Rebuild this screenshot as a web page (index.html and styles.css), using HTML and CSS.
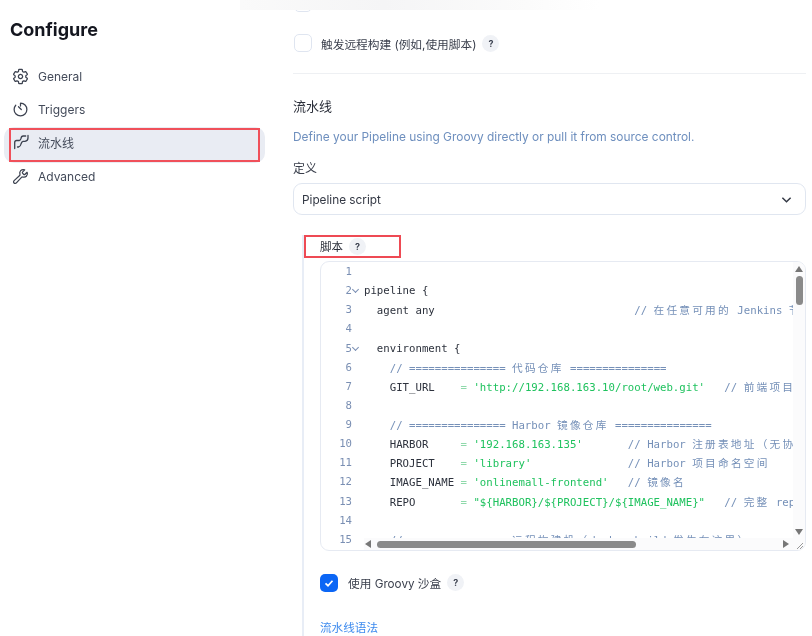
FILE: index.html
```html
<!DOCTYPE html>
<html lang="zh">
<head>
<meta charset="utf-8">
<title>Configure</title>
<link rel="stylesheet" href="styles.css">
</head>
<body>
<div class="page">
  <div class="top-fade"></div>
  <aside class="sidebar">
    <h1 class="title">Configure</h1>
    <nav class="menu">
      <a class="item">
        <svg class="icon" viewBox="0 0 512 512"><path class="st" d="M262.29 192.31a64 64 0 1057.4 57.4 64.13 64.13 0 00-57.4-57.4zM416.39 256a154.34 154.34 0 01-1.53 20.79l45.21 35.46a10.81 10.81 0 012.45 13.75l-42.77 74a10.81 10.81 0 01-13.14 4.59l-44.9-18.08a16.11 16.11 0 00-15.17 1.75A164.48 164.48 0 01325 400.8a15.94 15.94 0 00-8.82 12.14l-6.73 47.89a11.08 11.08 0 01-10.68 9.17h-85.54a11.11 11.11 0 01-10.69-8.87l-6.72-47.82a16.07 16.07 0 00-9-12.22 155.3 155.3 0 01-21.46-12.57 16 16 0 00-15.11-1.71l-44.89 18.07a10.81 10.81 0 01-13.14-4.58l-42.77-74a10.8 10.8 0 012.45-13.75l38.21-30a16.05 16.05 0 006-14.08c-.36-4.17-.58-8.33-.58-12.5s.21-8.27.58-12.35a16 16 0 00-6.07-13.94l-38.19-30A10.81 10.81 0 0149.48 186l42.77-74a10.81 10.81 0 0113.14-4.59l44.9 18.08a16.11 16.11 0 0015.17-1.75A164.48 164.48 0 01187 111.2a15.94 15.94 0 008.82-12.14l6.73-47.89A11.08 11.08 0 01213.23 42h85.54a11.11 11.11 0 0110.69 8.87l6.72 47.82a16.07 16.07 0 009 12.22 155.3 155.3 0 0121.46 12.57 16 16 0 0015.11 1.71l44.89-18.07a10.81 10.81 0 0113.14 4.58l42.77 74a10.8 10.8 0 01-2.45 13.75l-38.21 30a16.05 16.05 0 00-6.07 14.08c.33 4.14.55 8.3.55 12.47z"/></svg>
        <span>General</span>
      </a>
      <a class="item">
        <svg class="icon" viewBox="0 0 512 512"><path class="st" d="M112.91 128A191.85 191.85 0 0064 254c-1.18 106.35 85.65 193.8 192 194 106.2.2 192-85.83 192-192 0-104.54-83.55-189.61-187.5-192a4.36 4.36 0 00-4.5 4.37V152"/><path class="st" d="M280 256l-84-84"/></svg>
        <span>Triggers</span>
      </a>
      <a class="item active">
        <svg class="icon" viewBox="0 0 17 17"><path class="st2" d="M2.700 14.500V8.500q0-2 2-2h2.500q1.500-.3 1.800-2 .3-2.500 2.200-2.500h2.500"/><path class="st2" d="M16 1.500V4q0 3-3 3.300h-2q-1.500.3-2 2.700-.5 2.700-2.500 3H5.500"/></svg>
        <span>流水线</span>
        <span class="mark-nav"></span>
      </a>
      <a class="item">
        <svg class="icon" viewBox="0 0 512 512"><path class="st" d="M393.87 190a32.1 32.1 0 01-45.25 0l-26.57-26.57a32.09 32.09 0 010-45.26L382.19 58a1 1 0 00-.3-1.64c-38.82-16.64-89.15-8.16-121.11 23.57-30.58 30.35-32.32 76-21.12 115.84a31.93 31.93 0 01-9.06 32.08L64 380a48.17 48.17 0 1068 68l153.86-167a31.93 31.93 0 0131.6-9.13c39.54 10.59 84.54 8.6 114.72-21.19 32.49-32 39.5-88.56 23.75-120.93a1 1 0 00-1.6-.26z"/></svg>
        <span>Advanced</span>
      </a>
    </nav>
  </aside>

  <main class="main">
    <div class="cut-row"><span class="box"></span></div>
    <div class="check-row first">
      <span class="box"></span>
      <span class="check-label">触发远程构建 (例如,使用脚本)</span>
      <span class="help">?</span>
    </div>
    <hr class="divider">
    <h2 class="section">流水线</h2>
    <p class="desc">Define your Pipeline using Groovy directly or pull it from source control.</p>
    <div class="field-label">定义</div>
    <div class="select">
      <span>Pipeline script</span>
      <svg class="chev" viewBox="0 0 12 8"><path d="M1.500 1.500 6 6l4.500-4.500"/></svg>
    </div>

    <section class="nested">
      <div class="script-label">
        <span>脚本</span>
        <span class="help">?</span>
      </div>
      <div class="editor">
        <div class="gutter">
          <div class="ln">1</div><div class="ln fold">2</div><div class="ln">3</div><div class="ln">4</div><div class="ln fold">5</div><div class="ln">6</div><div class="ln">7</div><div class="ln">8</div><div class="ln">9</div><div class="ln">10</div><div class="ln">11</div><div class="ln">12</div><div class="ln">13</div><div class="ln">14</div><div class="ln">15</div>
        </div>
        <div class="code">
          <div class="cl"> </div>
          <div class="cl">pipeline {</div>
          <div class="cl">  agent any                               <span class="cm">// <i>在任意可用的</i> Jenkins <i>节</i></span></div>
          <div class="cl"> </div>
          <div class="cl">  environment {</div>
          <div class="cl">    <span class="cm">// =============== <i>代码仓库</i> ===============</span></div>
          <div class="cl">    GIT_URL    <span class="eq">=</span> <span class="str">'http://192.168.163.10/root/web.git'</span>   <span class="cm">// <i>前端项目</i></span></div>
          <div class="cl"> </div>
          <div class="cl">    <span class="cm">// =============== Harbor <i>镜像仓库</i> ===============</span></div>
          <div class="cl">    HARBOR     <span class="eq">=</span> <span class="str">'192.168.163.135'</span>       <span class="cm">// Harbor <i>注册表地址（无协</i></span></div>
          <div class="cl">    PROJECT    <span class="eq">=</span> <span class="str">'library'</span>               <span class="cm">// Harbor <i>项目命名空间</i></span></div>
          <div class="cl">    IMAGE_NAME <span class="eq">=</span> <span class="str">'onlinemall-frontend'</span>   <span class="cm">// <i>镜像名</i></span></div>
          <div class="cl">    REPO       <span class="eq">=</span> <span class="str">"${HARBOR}/${PROJECT}/${IMAGE_NAME}"</span>   <span class="cm">// <i>完整</i> rep</span></div>
          <div class="cl"> </div>
          <div class="cl">    <span class="cm">// =============== <i>远程构建机（</i>docker build <i>发生在这里）</i></span></div>
        </div>
        <div class="vbar">
          <svg class="arrow up" viewBox="0 0 8 6"><path d="M4 0l4 6H0z"/></svg>
          <span class="vthumb"></span>
          <svg class="arrow down" viewBox="0 0 8 6"><path d="M4 6l4-6H0z"/></svg>
        </div>
        <div class="hbar">
          <svg class="arrow left" viewBox="0 0 6 8"><path d="M0 4l6-4v8z"/></svg>
          <span class="hthumb"></span>
          <svg class="arrow right" viewBox="0 0 6 8"><path d="M6 4L0 0v8z"/></svg>
          <svg class="grip" viewBox="0 0 6 6"><path d="M0 6l6-6M3 6l3-3"/></svg>
        </div>
      </div>
      <div class="check-row groovy">
        <span class="box on"><svg viewBox="0 0 12 12"><path d="M2.500 6.300 5 8.700l4.500-5"/></svg></span>
        <span class="check-label">使用 Groovy 沙盒</span>
        <span class="help">?</span>
      </div>
      <a class="link">流水线语法</a>
    </section>
  </main>
</div>
</body>
</html>
```
FILE: styles.css
```css
* { box-sizing: border-box; }
html, body { margin: 0; height: 100%; background: #fff; overflow: hidden; }
body { font-family: Inter, "Noto Sans CJK SC", sans-serif; color: #1f2433; }
.page { position: relative; display: flex; width: 812px; height: 636px; overflow: hidden; filter: blur(0.3px); }
.top-fade { position: absolute; left: 240px; top: 0; width: 360px; height: 10px; background: linear-gradient(90deg, #fafafa, #f5f5f6 40%, #fbfbfb 80%, #fff); }

.sidebar { width: 293px; flex: none; padding: 20px 28px 0 4px; }
.title { margin: 0 0 20px 6px; font-size: 18px; line-height: 20px; font-weight: 700; color: #14161f; }
.menu { display: flex; flex-direction: column; }
.item { position: relative; display: flex; align-items: center; gap: 9px; height: 33.3px; padding-left: 8px; font-size: 12px; color: #444b5a; border-radius: 10px; }
.item.active { background: #e9ecf3; height: 36px; margin: 0.4px 0 -3px; padding-bottom: 5px; }
.icon { width: 17px; height: 17px; flex: none; }
.st { fill: none; stroke: #3c4250; stroke-width: 38; stroke-linecap: round; stroke-linejoin: round; }
.st2 { fill: none; stroke: #3c4250; stroke-width: 1.3; stroke-linecap: round; stroke-linejoin: round; }
.mark-nav { position: absolute; left: 5px; right: 5px; top: 1px; bottom: 1px; border: 2px solid #f0505a; }

.main { width: 513px; flex: none; }
.cut-row { height: 12px; overflow: hidden; display: flex; align-items: flex-end; }
.box { display: block; width: 18px; height: 18px; flex: none; margin-left: 1px; border: 1.5px solid #dfe5f0; border-radius: 5px; background: #fff; }
.check-row { display: flex; align-items: center; font-size: 11.7px; color: #3a3f4c; }
.check-row.first { margin-top: 22px; height: 18px; }
.check-label { margin-left: 9px; }
.help { display: flex; align-items: center; justify-content: center; width: 17px; height: 17px; margin-left: 6px; border-radius: 50%; background: #f0f2f6; color: #404654; font-size: 9px; font-weight: 700; }
.divider { margin: 21px 0 0; border: 0; border-top: 1px solid #eef0f3; }
.section { margin: 23px 0 0; font-size: 13px; line-height: 18px; font-weight: 400; color: #2b2f3a; }
.desc { margin: 13px 0 0; font-size: 11.9px; line-height: 18px; color: #6e8fbe; }
.field-label { margin-top: 14px; font-size: 12px; line-height: 18px; color: #3a3f4c; }
.select { display: flex; align-items: center; justify-content: space-between; height: 32px; margin-top: 5px; padding: 1px 13px 0 8px; border: 1px solid #e0e6f0; border-radius: 9px; font-size: 11.8px; color: #333844; }
.chev { width: 11px; height: 8px; fill: none; stroke: #333844; stroke-width: 1.6; }

.nested { margin: 20px 0 0 9px; padding-left: 0; border-left: 2px solid #e8edf6; height: 401px; }
.script-label { display: flex; align-items: center; width: 97px; height: 23px; padding: 0 0 1px 14px; border: 2px solid #ee4a54; font-size: 11.5px; color: #2b2f3a; }
.script-label .help { margin-left: 6px; }
.editor { position: relative; display: flex; width: 486px; height: 290px; margin: 3px 0 0 16px; border: 1px solid #e6eaf2; border-radius: 9px; overflow: hidden; background: #fff; font-family: "DejaVu Sans Mono", monospace; font-size: 10.7px; line-height: 19.14px; }
.gutter { width: 43px; flex: none; color: #7a8fb3; }
.ln { position: relative; height: 19.14px; padding-right: 12px; text-align: right; }
.ln.fold::after { content: ""; position: absolute; right: 6px; top: 6px; width: 4px; height: 4px; border-right: 1px solid #7a8fb3; border-bottom: 1px solid #7a8fb3; transform: rotate(45deg); }
.code { flex: 1; min-width: 0; overflow: hidden; color: #2d323d; }
.cl { height: 19.14px; white-space: pre; }
.cm { color: #7590b8; }
.cm i { font-style: normal; font-family: "Noto Sans CJK SC", sans-serif; letter-spacing: 2.2px; }
.str { color: #1fc25e; }
.eq { color: #8fd9ab; }

.vbar { position: absolute; right: 0; top: 0; bottom: 12px; width: 12px; background: #fbfbfc; }
.vthumb { position: absolute; left: 2.5px; top: 14px; width: 7px; height: 29px; border-radius: 4px; background: #8a8a8a; }
.hbar { position: absolute; left: 43px; right: 0; bottom: 0; height: 12px; background: #fbfbfc; }
.hthumb { position: absolute; left: 13px; top: 2.5px; width: 259px; height: 7px; border-radius: 4px; background: #8a8a8a; }
.arrow { position: absolute; fill: #777; }
.arrow.up { right: 2px; top: 4px; width: 8px; height: 6px; }
.arrow.down { right: 2px; bottom: 3px; width: 8px; height: 6px; }
.arrow.left { left: 1px; top: 2px; width: 6px; height: 8px; }
.arrow.right { right: 16px; top: 2px; width: 6px; height: 8px; }
.grip { position: absolute; right: 2px; bottom: 1px; width: 6px; height: 6px; fill: none; stroke: #999; stroke-width: 1; }

.check-row.groovy { margin: 22px 0 0 16px; height: 19px; }
.box.on { margin-left: 0; border: 0; background: #0b66f5; display: flex; align-items: center; justify-content: center; }
.box.on svg { width: 12px; height: 12px; fill: none; stroke: #fff; stroke-width: 1.7; }
.groovy .check-label { margin-left: 10px; }
.link { display: block; margin: 27px 0 0 16px; font-size: 11.6px; line-height: 18px; color: #3e8bee; }
```
